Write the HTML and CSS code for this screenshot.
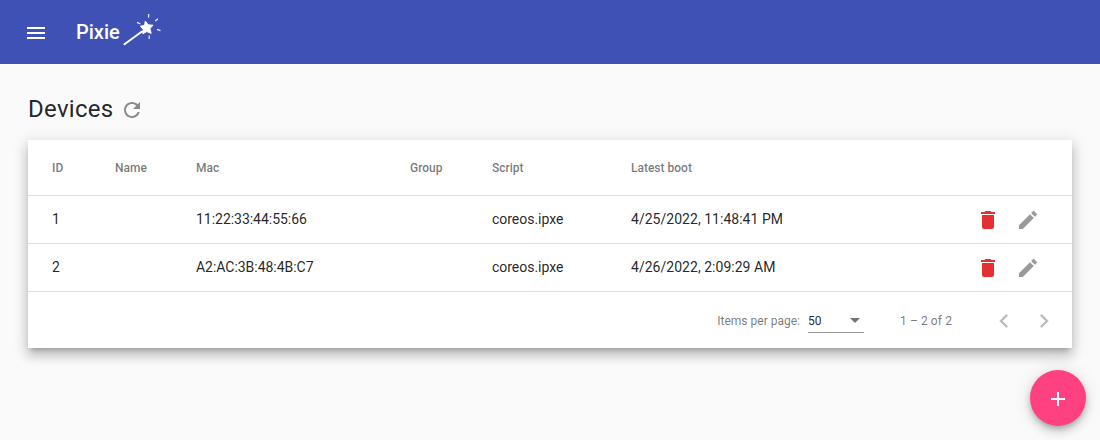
FILE: index.html
```html
<!DOCTYPE html>
<html lang="en">
<head>
<meta charset="utf-8">
<title>Pixie</title>
<link rel="stylesheet" href="styles.css">
</head>
<body>
<header class="toolbar">
  <button class="icon-button" aria-label="Menu"><svg class="icon" viewBox="0 0 24 24"><path d="M3 18h18v-2H3v2zm0-5h18v-2H3v2zm0-7v2h18V6H3z"/></svg></button>
  <span class="brand">Pixie</span>
  <svg class="wand" viewBox="0 0 40 34">
    <path class="stick" d="M2.400 31.200 20 18.500"/>
    <path class="star" d="M23.300 8 26.200 11.800 31 12.200 28 15.600 29.200 20.400 24.800 18.600 20.800 20.800 21.200 16.400 18.400 13.200 22.600 12.200z"/>
    <path class="ray" d="M26.600 1v3.400M36 5.800l-2.800 2.200M35 16.400l3.500 1.200M27.200 22.600v3.400M15 9.400l3.400 1.600"/>
  </svg>
</header>
<main class="page">
  <div class="heading">
    <h1 class="title">Devices</h1>
    <svg class="icon refresh" viewBox="0 0 24 24"><path d="M17.65 6.35C16.2 4.9 14.21 4 12 4c-4.42 0-7.99 3.58-7.99 8s3.57 8 7.99 8c3.73 0 6.84-2.55 7.73-6h-2.08c-.82 2.33-3.04 4-5.65 4-3.31 0-6-2.69-6-6s2.69-6 6-6c1.66 0 3.14.69 4.22 1.78L13 11h7V4l-2.35 2.35z"/></svg>
  </div>
  <section class="card">
    <div class="row row-head"><span>ID</span><span>Name</span><span>Mac</span><span>Group</span><span>Script</span><span>Latest boot</span><span></span></div>
    <div class="row row-body">
      <span>1</span><span></span><span class="mac">11:22:33:44:55:66</span><span></span><span class="script">coreos.ipxe</span><span class="boot">4/25/2022, 11:48:41 PM</span>
      <span class="actions">
        <svg class="icon delete" viewBox="0 0 24 24"><path d="M6 19c0 1.100.9 2 2 2h8c1.100 0 2-.9 2-2V7H6v12zM19 4h-3.500l-1-1h-5l-1 1H5v2h14V4z"/></svg>
        <svg class="icon edit" viewBox="0 0 24 24"><path d="M3 17.250V21h3.750L17.810 9.940l-3.750-3.750L3 17.250zM20.710 7.040c.39-.39.39-1.020 0-1.410l-2.340-2.340c-.39-.39-1.020-.39-1.410 0l-1.830 1.830 3.750 3.750 1.830-1.830z"/></svg>
      </span>
    </div>
    <div class="row row-body">
      <span>2</span><span></span><span class="mac">A2:AC:3B:48:4B:C7</span><span></span><span class="script">coreos.ipxe</span><span class="boot">4/26/2022, 2:09:29 AM</span>
      <span class="actions">
        <svg class="icon delete" viewBox="0 0 24 24"><path d="M6 19c0 1.100.9 2 2 2h8c1.100 0 2-.9 2-2V7H6v12zM19 4h-3.500l-1-1h-5l-1 1H5v2h14V4z"/></svg>
        <svg class="icon edit" viewBox="0 0 24 24"><path d="M3 17.250V21h3.750L17.810 9.940l-3.750-3.750L3 17.250zM20.710 7.040c.39-.39.39-1.020 0-1.410l-2.340-2.340c-.39-.39-1.020-.39-1.410 0l-1.830 1.830 3.750 3.750 1.830-1.830z"/></svg>
      </span>
    </div>
    <footer class="paginator">
      <span>Items per page:</span>
      <div class="select"><span>50</span><i class="arrow"></i></div>
      <span class="range">1 – 2 of 2</span>
      <div class="pages">
        <svg class="page-arrow" viewBox="0 0 24 24"><path d="M15.410 7.410 14 6l-6 6 6 6 1.410-1.410L10.830 12z"/></svg>
        <svg class="page-arrow" viewBox="0 0 24 24"><path d="M10 6 8.590 7.410 13.170 12l-4.580 4.590L10 18l6-6z"/></svg>
      </div>
    </footer>
  </section>
</main>
<button class="fab" aria-label="Add"><svg class="icon" viewBox="0 0 24 24"><path d="M19 13h-6v6h-2v-6H5v-2h6V5h2v6h6v2z"/></svg></button>
</body>
</html>
```
FILE: styles.css
```css
* { box-sizing: border-box; }
body {
  margin: 0;
  height: 440px;
  overflow: hidden;
  background: #fafafa;
  color: rgba(0, 0, 0, .87);
  font: 14px/20px Roboto, sans-serif;
}
button { border: 0; padding: 0; background: none; color: inherit; }
svg { display: block; flex: none; fill: currentColor; }
.icon { width: 24px; height: 24px; }
.toolbar {
  display: flex;
  align-items: center;
  height: 64px;
  padding: 0 16px;
  background: #3f51b5;
  color: #fff;
}
.icon-button {
  display: grid;
  place-items: center;
  width: 40px;
  height: 40px;
  padding-top: 2px;
}
.brand { margin-left: 20px; font-size: 20px; font-weight: 500; line-height: 32px; }
.wand { width: 40px; height: 34px; margin: -4px 0 0 2px; }
.stick { fill: none; stroke: #fff; stroke-width: 2; stroke-linecap: round; }
.star { stroke: #fff; stroke-width: .9; stroke-linejoin: round; }
.ray { fill: none; stroke: #fff; stroke-width: 1.2; stroke-opacity: .9; }
.page { padding: 29px 28px 0; }
.heading { display: flex; align-items: center; gap: 6px; height: 32px; }
.title { margin: 0; font-size: 24px; font-weight: 400; line-height: 32px; letter-spacing: .3px; }
.refresh { margin-top: 2px; color: #8b8b8b; }
.card {
  margin-top: 15px;
  background: #fff;
  box-shadow: 0 5px 5px -3px rgba(0, 0, 0, .2), 0 8px 10px 1px rgba(0, 0, 0, .14), 0 3px 14px 2px rgba(0, 0, 0, .12);
}
.row {
  display: grid;
  grid-template-columns: 63px 81px 214px 82px 139px 1fr 64px;
  align-items: center;
  height: 48px;
  padding: 0 32px 0 24px;
  border-bottom: 1px solid #e0e0e0;
}
.row-head { height: 56px; color: rgba(0, 0, 0, .54); font-size: 12px; font-weight: 500; }
.row-body { padding-bottom: 1px; }
.mac, .script { letter-spacing: -.03px; }
.boot { letter-spacing: .03px; }
.row .actions { display: flex; gap: 16px; padding-top: 2px; }
.delete { color: #e53030; }
.edit { color: #999; }
.paginator {
  display: flex;
  justify-content: flex-end;
  align-items: center;
  height: 56px;
  padding-right: 14px;
  color: rgba(0, 0, 0, .54);
  font-size: 12px;
}
.paginator > span { padding-top: 2px; }
.range { letter-spacing: .1px; }
.select {
  display: flex;
  justify-content: space-between;
  align-items: center;
  width: 56px;
  height: 24px;
  margin: 2px 36px 0 8px;
  padding-right: 4px;
  border-bottom: 1px solid #949494;
  color: rgba(0, 0, 0, .87);
}
.arrow {
  border: 5px solid transparent;
  border-top-color: #757575;
  border-bottom: 0;
}
.pages { display: flex; gap: 12px; margin-left: 38px; padding-top: 2px; }
.page-arrow { width: 28px; height: 28px; color: #bdbdbd; }
.fab {
  position: absolute;
  left: 1030px;
  top: 370px;
  display: grid;
  place-items: center;
  width: 56px;
  height: 56px;
  padding-top: 2px;
  border-radius: 50%;
  background: #ff4081;
  color: #fff;
  box-shadow: 0 3px 5px -1px rgba(0, 0, 0, .2), 0 6px 10px rgba(0, 0, 0, .14), 0 1px 18px rgba(0, 0, 0, .12);
}
```
